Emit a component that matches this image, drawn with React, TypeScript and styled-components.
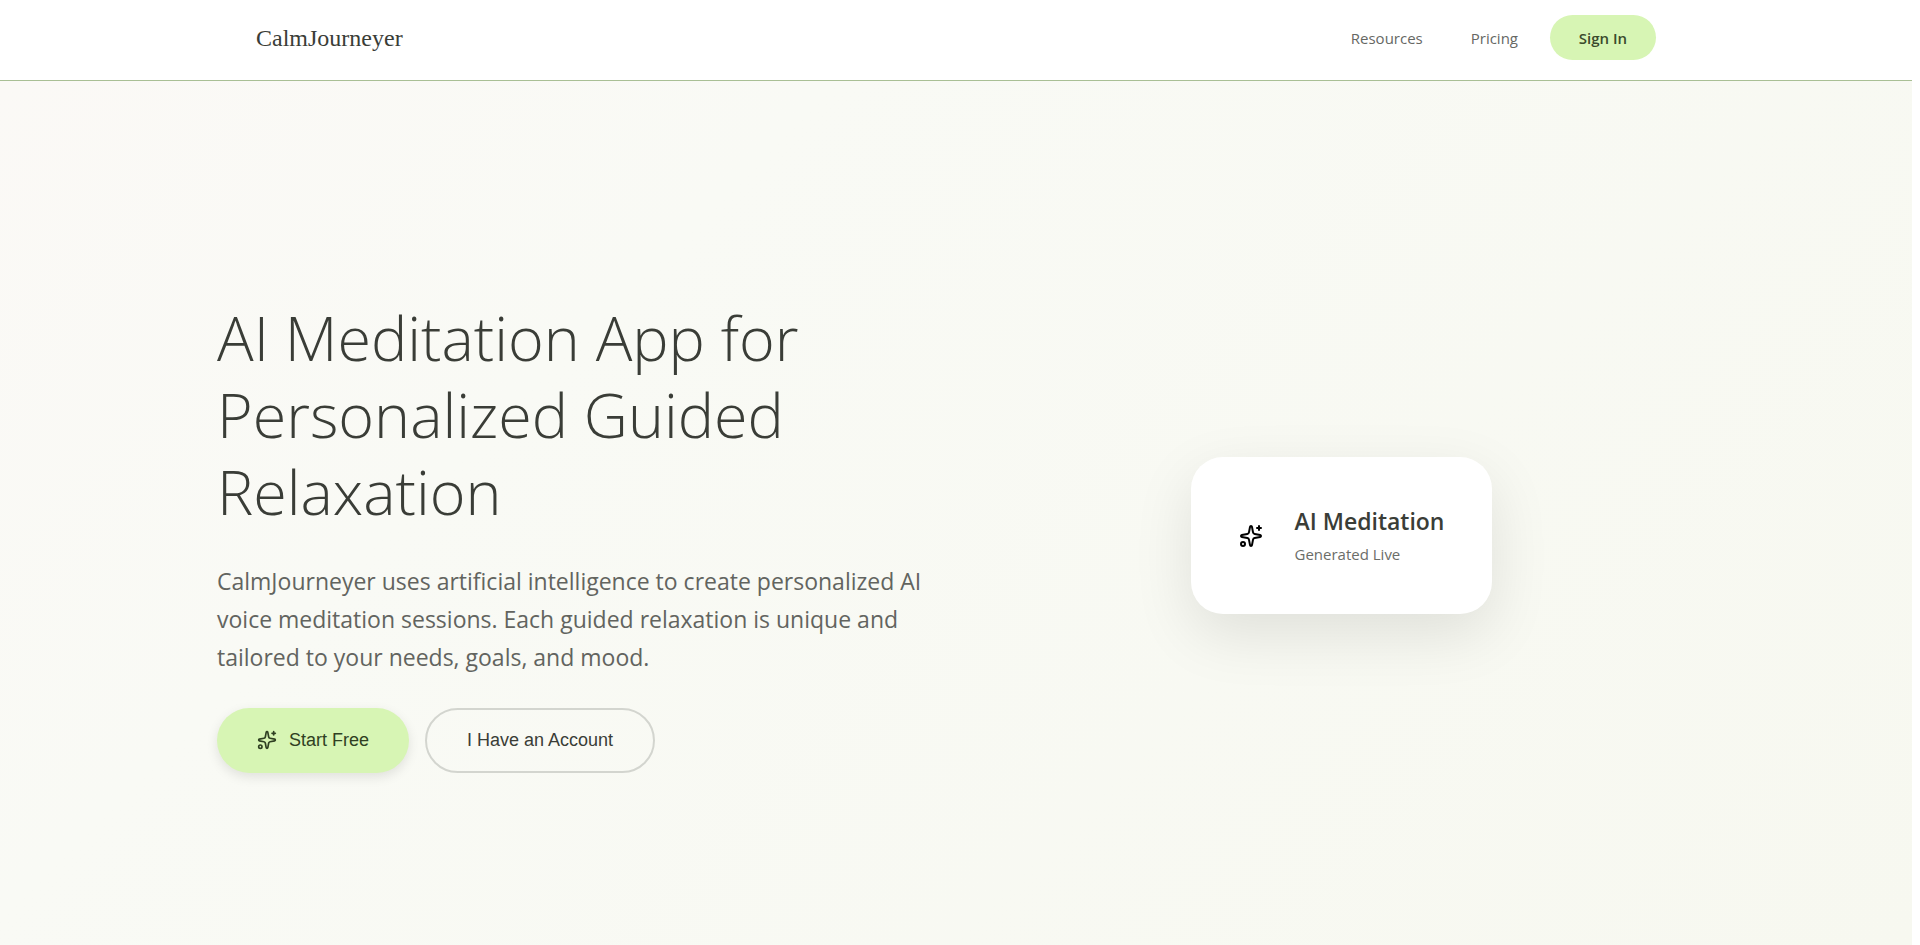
import React from "react";
import styled, { createGlobalStyle } from "styled-components";
import { Sparkles } from "lucide-react";

const GlobalStyle = createGlobalStyle`
  *, *::before, *::after { box-sizing: border-box; }
  body {
    margin: 0;
    background: #ffffff;
    color: #3a3d37;
    font-family: "Segoe UI", "Open Sans", "Noto Sans", sans-serif;
  }
`;

const Page = styled.div`
  display: flex;
  flex-direction: column;
  min-height: 100vh;
  margin-right: 8px;
`;

const Header = styled.header`
  background: #ffffff;
  border-bottom: 1px solid #a9bf95;
`;

const Nav = styled.nav`
  display: flex;
  align-items: center;
  justify-content: space-between;
  max-width: 1400px;
  margin: 0 auto;
  padding: 15px 0 20px;
`;

const Logo = styled.a`
  font-family: "Times New Roman", "Liberation Serif", serif;
  font-size: 24px;
  line-height: 28px;
  color: #3a3d37;
  text-decoration: none;
`;

const NavLinks = styled.div`
  display: flex;
  align-items: center;
`;

const NavLink = styled.a`
  margin-right: 48px;
  font-size: 15px;
  line-height: 24px;
  color: #666864;
  text-decoration: none;

  &:last-of-type { margin-right: 32px; }
`;

const SignIn = styled.button`
  min-width: 106px;
  height: 45px;
  padding: 0 28px;
  border: 0;
  border-radius: 24px;
  background: #d7f5b4;
  color: #3a4a2c;
  font-family: inherit;
  font-size: 15px;
  font-weight: 600;
`;

const Hero = styled.main`
  flex: 1;
  display: flex;
  align-items: center;
  justify-content: center;
  padding-top: 45px;
  background: linear-gradient(135deg, #fbf9f6 0%, #f9faf5 30%, #f7f8f0 100%);
`;

const HeroGrid = styled.div`
  display: grid;
  grid-template-columns: 1fr 1fr;
  align-items: center;
  gap: 64px;
  width: 100%;
  max-width: 1478px;
`;

const Title = styled.h1`
  margin: 0 0 32px;
  font-size: 61px;
  line-height: 77px;
  font-weight: 300;
  color: #3a3d37;
`;

const Lead = styled.p`
  margin: 0 0 32px;
  font-size: 23px;
  line-height: 38px;
  color: #62645f;
`;

const Actions = styled.div`
  display: flex;
  gap: 16px;
`;

const Button = styled.button<{ $primary?: boolean }>`
  display: flex;
  align-items: center;
  gap: 12px;
  height: 65px;
  padding: 0 40px;
  border: ${(p) => (p.$primary ? "0" : "2px solid #d3d5cf")};
  border-radius: 33px;
  background: ${(p) => (p.$primary ? "#d7f5b4" : "transparent")};
  box-shadow: ${(p) => (p.$primary ? "0 4px 12px rgba(0, 0, 0, 0.1)" : "none")};
  color: ${(p) => (p.$primary ? "#2f4022" : "#3a3d37")};
  font-family: Arial, "Liberation Sans", sans-serif;
  font-size: 18px;
`;

const Visual = styled.div`
  display: flex;
  justify-content: center;
`;

const Card = styled.div`
  display: flex;
  align-items: center;
  gap: 32px;
  padding: 48px;
  border-radius: 32px;
  background: #ffffff;
  box-shadow: 0 20px 60px rgba(0, 0, 0, 0.1);
`;

const CardTitle = styled.h2`
  margin: 0 0 4px;
  font-size: 23px;
  line-height: 33px;
  font-weight: 600;
  color: #3a3d37;
`;

const CardText = styled.p`
  margin: 0;
  font-size: 15px;
  line-height: 24px;
  color: #6b6d68;
`;

export default function App() {
  return (
    <Page>
      <GlobalStyle />
      <Header>
        <Nav>
          <Logo href="#">CalmJourneyer</Logo>
          <NavLinks>
            <NavLink href="#resources">Resources</NavLink>
            <NavLink href="#pricing">Pricing</NavLink>
            <SignIn type="button">Sign In</SignIn>
          </NavLinks>
        </Nav>
      </Header>
      <Hero>
        <HeroGrid>
          <div>
            <Title>AI Meditation App for Personalized Guided Relaxation</Title>
            <Lead>
              CalmJourneyer uses artificial intelligence to create personalized AI voice meditation
              sessions. Each guided relaxation is unique and tailored to your needs, goals, and mood.
            </Lead>
            <Actions>
              <Button type="button" $primary>
                <Sparkles size={20} />
                Start Free
              </Button>
              <Button type="button">I Have an Account</Button>
            </Actions>
          </div>
          <Visual>
            <Card>
              <Sparkles size={24} color="#000000" />
              <div>
                <CardTitle>AI Meditation</CardTitle>
                <CardText>Generated Live</CardText>
              </div>
            </Card>
          </Visual>
        </HeroGrid>
      </Hero>
    </Page>
  );
}
